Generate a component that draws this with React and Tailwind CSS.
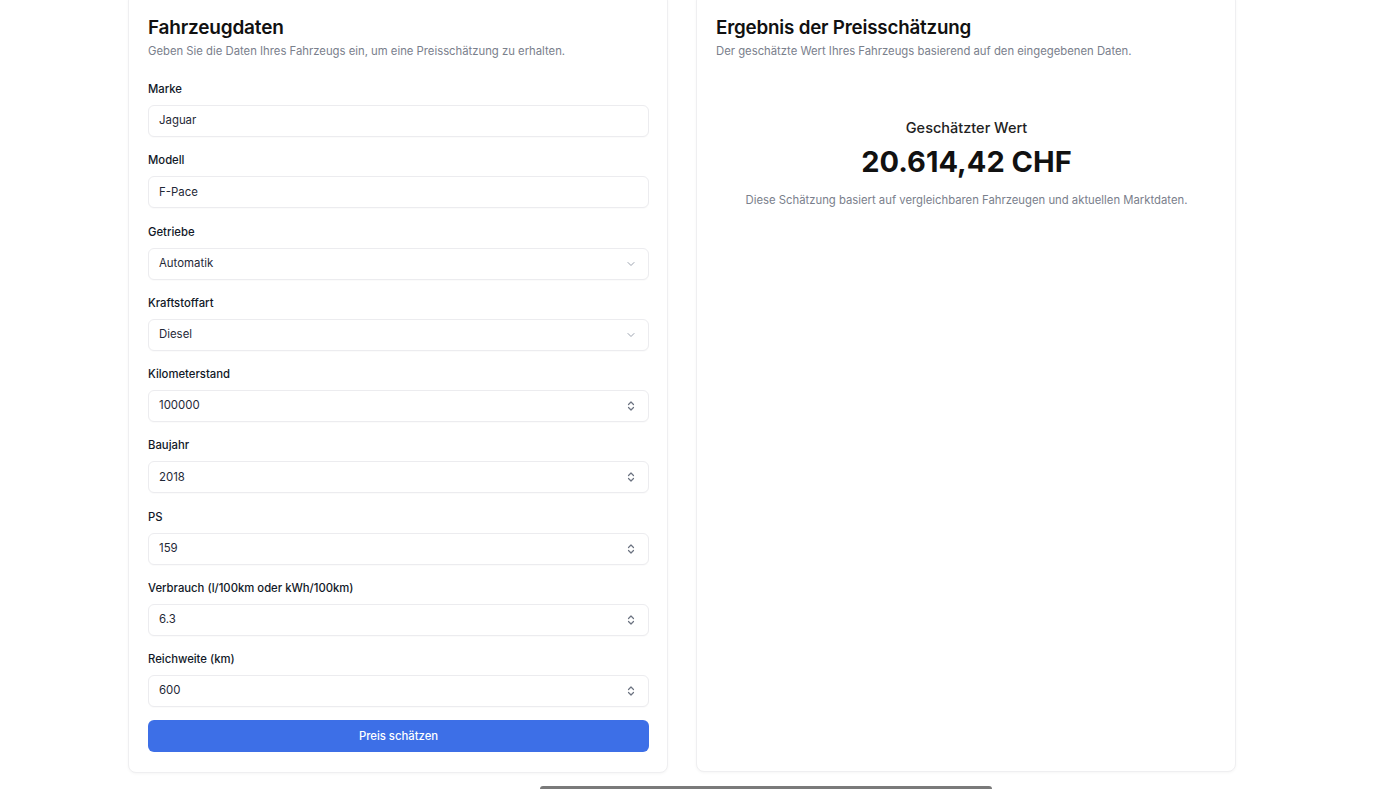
import React from "react";

function Chevron() {
  return (
    <svg width="12" height="12" viewBox="0 0 24 24" fill="none" stroke="#9ca3af" strokeWidth="2" strokeLinecap="round" strokeLinejoin="round">
      <path d="m6 9 6 6 6-6" />
    </svg>
  );
}

function Spinner() {
  return (
    <svg width="8" height="12" viewBox="0 0 8 12" fill="none" stroke="#6b7280" strokeWidth="1.2" strokeLinecap="round" strokeLinejoin="round">
      <path d="M1.5 4.5 4 2l2.5 2.5" />
      <path d="M1.5 7.5 4 10l2.5-2.5" />
    </svg>
  );
}

function Field({ label, value, kind }) {
  return (
    <div className="flex flex-col gap-2">
      <div className="text-[11.3px] leading-4 font-medium text-[#111827]">{label}</div>
      <div
        className={
          "h-8 rounded-md border border-[#ececef] bg-white flex items-center justify-between pl-[10px] shadow-[0_1px_1px_rgba(0,0,0,0.02)] " +
          (kind === "select" ? "pr-[11px]" : "pr-[13px]")
        }
      >
        <span className="text-[11.4px] text-[#1f2937]">{value}</span>
        {kind === "select" && <Chevron />}
        {kind === "number" && <Spinner />}
      </div>
    </div>
  );
}

export default function App() {
  const fields = [
    ["Marke", "Jaguar", "text"],
    ["Modell", "F-Pace", "text"],
    ["Getriebe", "Automatik", "select"],
    ["Kraftstoffart", "Diesel", "select"],
    ["Kilometerstand", "100000", "number"],
    ["Baujahr", "2018", "number"],
    ["PS", "159", "number"],
    ["Verbrauch (l/100km oder kWh/100km)", "6.3", "number"],
    ["Reichweite (km)", "600", "number"],
  ];
  return (
    <div
      className="relative h-[789px] w-[1390px] overflow-hidden bg-white"
      style={{ fontFamily: "Inter, 'Noto Sans', sans-serif" }}
    >
      <div className="ml-[128px] -mt-[7px] flex w-[1108px] gap-[28px] items-start">
        <div className="w-[540px] rounded-lg border border-[#efeff1] bg-white pt-5 pb-5 pl-[19px] pr-[18px] shadow-[0_1px_3px_rgba(0,0,0,0.04)]">
          <h2 className="text-[19px] leading-7 font-semibold text-[#111111] tracking-[-0.2px]">Fahrzeugdaten</h2>
          <p className="mt-px text-[11.3px] leading-4 text-[#7a808c]">
            Geben Sie die Daten Ihres Fahrzeugs ein, um eine Preisschätzung zu erhalten.
          </p>
          <div className="mt-[22px] flex flex-col gap-[15.25px]">
            {fields.map(([l, v, k]) => (
              <Field key={l} label={l} value={v} kind={k} />
            ))}
          </div>
          <button className="mt-[13px] h-8 w-full rounded-md bg-[#3d6fe7] text-[11.3px] font-medium text-white">
            Preis schätzen
          </button>
        </div>
        <div className="w-[540px] h-[779px] rounded-lg border border-[#efeff1] bg-white pt-5 pb-5 pl-[19px] pr-[18px] shadow-[0_1px_3px_rgba(0,0,0,0.04)]">
          <h2 className="text-[18.8px] leading-7 font-semibold text-[#111111] tracking-[-0.2px]">Ergebnis der Preisschätzung</h2>
          <p className="mt-px text-[11.3px] leading-4 text-[#7a808c]">
            Der geschätzte Wert Ihres Fahrzeugs basierend auf den eingegebenen Daten.
          </p>
          <div className="mt-[59px] flex flex-col items-center">
            <div className="text-[14.5px] leading-5 font-medium text-[#222]">Geschätzter Wert</div>
            <div className="mt-[6px] text-[29px] leading-9 font-bold text-[#111111]">20.614,42 CHF</div>
            <div className="mt-3 text-[11.3px] leading-4 text-[#7a808c]">
              Diese Schätzung basiert auf vergleichbaren Fahrzeugen und aktuellen Marktdaten.
            </div>
          </div>
        </div>
      </div>
      <div className="absolute bottom-0 left-[540px] h-[3px] w-[452px] rounded-t-md bg-[#7a7a7a]" />
    </div>
  );
}
